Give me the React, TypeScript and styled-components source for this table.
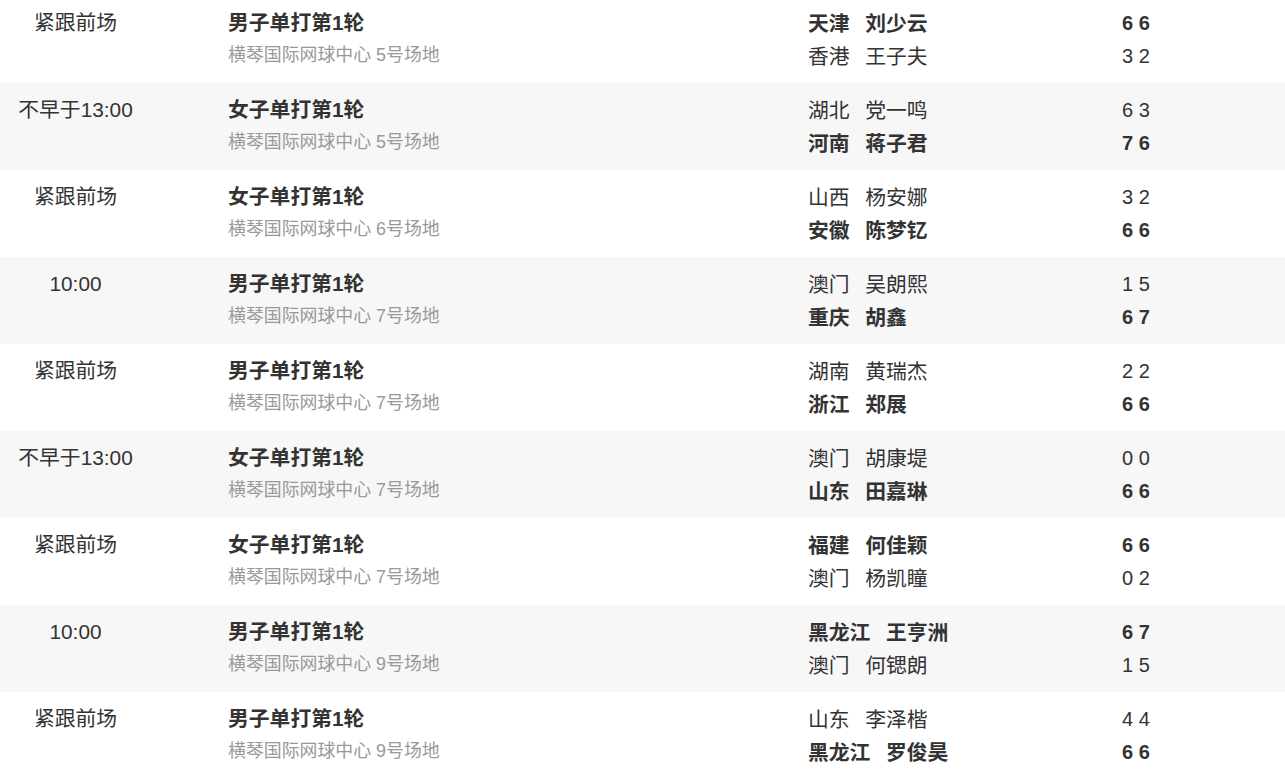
import React from 'react'
import styled, { createGlobalStyle } from 'styled-components'

const GlobalStyle = createGlobalStyle`
    html, body {
        margin: 0;
        padding: 0;
        background: #fff;
    }
    body {
        font-family: 'Liberation Sans', 'Noto Sans CJK SC', sans-serif;
        color: #333;
        overflow: hidden;
    }
`

const Table = styled.div`
    margin-top: -4px;
    border-top: 5px solid #fafafa;
`

const Row = styled.div<{ $shaded: boolean }>`
    display: grid;
    grid-template-columns: 151px 657px 314px 1fr;
    height: 87px;
    box-sizing: border-box;
    padding-top: 11px;
    background: ${(p) => (p.$shaded ? '#f7f7f7' : '#fff')};
    &:first-child {
        margin-top: -5px;
    }
`

const Time = styled.div`
    text-align: center;
    font-size: 20.8px;
    line-height: 32px;
`

const Event = styled.div`
    padding-left: 77px;
    display: flex;
    flex-direction: column;
`

const Title = styled.div`
    font-size: 20.8px;
    font-weight: 700;
    line-height: 32px;
`

const Venue = styled.div`
    font-size: 17.9px;
    color: #999;
    line-height: 33px;
`

const Lines = styled.div`
    display: flex;
    flex-direction: column;
`

const Line = styled.div<{ $win: boolean }>`
    font-size: 20.8px;
    line-height: 33px;
    font-weight: ${(p) => (p.$win ? 700 : 400)};
    white-space: nowrap;
`

const Score = styled(Line)`
    font-size: 20px;
`

const Province = styled.span`
    margin-right: 15.6px;
`

type Player = { prov: string; name: string; sets: string; win: boolean }
type Match = { time: string; title: string; court: string; players: [Player, Player] }

const p = (prov: string, name: string, sets: string, win = false): Player => ({ prov, name, sets, win })

const matches: Match[] = [
    { time: '紧跟前场', title: '男子单打第1轮', court: '5号场地', players: [p('天津', '刘少云', '6 6', true), p('香港', '王子夫', '3 2')] },
    { time: '不早于13:00', title: '女子单打第1轮', court: '5号场地', players: [p('湖北', '党一鸣', '6 3'), p('河南', '蒋子君', '7 6', true)] },
    { time: '紧跟前场', title: '女子单打第1轮', court: '6号场地', players: [p('山西', '杨安娜', '3 2'), p('安徽', '陈梦钇', '6 6', true)] },
    { time: '10:00', title: '男子单打第1轮', court: '7号场地', players: [p('澳门', '吴朗熙', '1 5'), p('重庆', '胡鑫', '6 7', true)] },
    { time: '紧跟前场', title: '男子单打第1轮', court: '7号场地', players: [p('湖南', '黄瑞杰', '2 2'), p('浙江', '郑展', '6 6', true)] },
    { time: '不早于13:00', title: '女子单打第1轮', court: '7号场地', players: [p('澳门', '胡康堤', '0 0'), p('山东', '田嘉琳', '6 6', true)] },
    { time: '紧跟前场', title: '女子单打第1轮', court: '7号场地', players: [p('福建', '何佳颖', '6 6', true), p('澳门', '杨凯瞳', '0 2')] },
    { time: '10:00', title: '男子单打第1轮', court: '9号场地', players: [p('黑龙江', '王亨洲', '6 7', true), p('澳门', '何锶朗', '1 5')] },
    { time: '紧跟前场', title: '男子单打第1轮', court: '9号场地', players: [p('山东', '李泽楷', '4 4'), p('黑龙江', '罗俊昊', '6 6', true)] },
]

const App: React.FC = (): JSX.Element => {
    return (
        <>
            <GlobalStyle />
            <Table>
                {matches.map((m, i) => (
                    <Row key={i} $shaded={i % 2 === 1}>
                        <Time>{m.time}</Time>
                        <Event>
                            <Title>{m.title}</Title>
                            <Venue>横琴国际网球中心 {m.court}</Venue>
                        </Event>
                        <Lines>
                            {m.players.map((pl, j) => (
                                <Line key={j} $win={pl.win}>
                                    <Province>{pl.prov}</Province>
                                    {pl.name}
                                </Line>
                            ))}
                        </Lines>
                        <Lines>
                            {m.players.map((pl, j) => (
                                <Score key={j} $win={pl.win}>
                                    {pl.sets}
                                </Score>
                            ))}
                        </Lines>
                    </Row>
                ))}
            </Table>
        </>
    )
}

export default App
